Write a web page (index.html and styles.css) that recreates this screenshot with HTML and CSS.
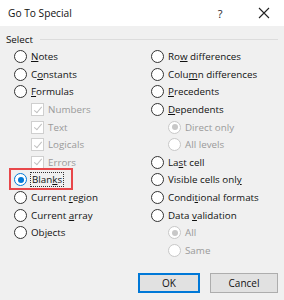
FILE: index.html
```html
<!DOCTYPE html>
<html lang="en">
<head>
    <meta charset="UTF-8">
    <title>Go To Special</title>
    <link rel="stylesheet" href="styles.css">
</head>
<body>
    <div class="dialog">
        <div class="titlebar">
            <span class="title">Go To Special</span>
            <span class="help">?</span>
            <span class="close">
                <svg width="12" height="12" viewBox="0 0 12 12"><path d="M1 1 L11 11 M11 1 L1 11" stroke="#222" stroke-width="1.1"/></svg>
            </span>
        </div>

        <div class="content">
            <div class="group-label"><span>Select</span><span class="line"></span></div>

            <div class="columns">
                <div class="col">
                    <div class="opt"><span class="radio"></span><span><u>N</u>otes</span></div>
                    <div class="opt"><span class="radio"></span><span>C<u>o</u>nstants</span></div>
                    <div class="opt"><span class="radio"></span><span><u>F</u>ormulas</span></div>
                    <div class="opt sub disabled"><span class="check"></span><span>Numbers</span></div>
                    <div class="opt sub disabled"><span class="check"></span><span>Text</span></div>
                    <div class="opt sub disabled"><span class="check"></span><span>Logicals</span></div>
                    <div class="opt sub disabled"><span class="check"></span><span>Errors</span></div>
                    <div class="opt highlight"><span class="radio on"></span><span class="focus">Blan<u>k</u>s</span></div>
                    <div class="opt"><span class="radio"></span><span>Current <u>r</u>egion</span></div>
                    <div class="opt"><span class="radio"></span><span>Current <u>a</u>rray</span></div>
                    <div class="opt"><span class="radio"></span><span>Ob<u>j</u>ects</span></div>
                </div>
                <div class="col">
                    <div class="opt"><span class="radio"></span><span>Ro<u>w</u> differences</span></div>
                    <div class="opt"><span class="radio"></span><span>Colu<u>m</u>n differences</span></div>
                    <div class="opt"><span class="radio"></span><span><u>P</u>recedents</span></div>
                    <div class="opt"><span class="radio"></span><span><u>D</u>ependents</span></div>
                    <div class="opt sub disabled"><span class="radio dim-on"></span><span>Direct only</span></div>
                    <div class="opt sub disabled"><span class="radio"></span><span>All levels</span></div>
                    <div class="opt"><span class="radio"></span><span>La<u>s</u>t cell</span></div>
                    <div class="opt"><span class="radio"></span><span>Visible cells onl<u>y</u></span></div>
                    <div class="opt"><span class="radio"></span><span>Condi<u>t</u>ional formats</span></div>
                    <div class="opt"><span class="radio"></span><span>Data <u>v</u>alidation</span></div>
                    <div class="opt sub disabled"><span class="radio dim-on"></span><span>All</span></div>
                    <div class="opt sub disabled"><span class="radio"></span><span>Same</span></div>
                </div>
            </div>

            <div class="buttons">
                <button class="btn default">OK</button>
                <button class="btn cancel">Cancel</button>
            </div>
        </div>
    </div>
</body>
</html>
```

FILE: styles.css
```css
body {
    margin: 0;
    font-family: 'Open Sans', 'Noto Sans', sans-serif;
    font-size: 9.8px;
    font-weight: 500;
    color: #111;
}

.dialog {
    width: 284px;
    height: 300px;
    background: #f0f0f0;
    overflow: hidden;
}

.titlebar {
    height: 26px;
    background: #fff;
    display: flex;
    align-items: center;
    padding-left: 8px;
}

.title {
    flex: 1;
    font-size: 10.2px;
    color: #111;
}

.help {
    width: 16px;
    text-align: center;
    margin-right: 30px;
    font-size: 11px;
    color: #222;
}

.close {
    width: 12px;
    height: 12px;
    margin-right: 14px;
    display: flex;
}

.content {
    padding: 4px 6px 0 6px;
}

.group-label {
    display: flex;
    align-items: center;
    height: 18px;
}

.group-label .line {
    flex: 1;
    height: 1px;
    background: #dcdcdc;
    margin-left: 7px;
}

.columns {
    display: grid;
    grid-template-columns: 137px 1fr;
    padding-left: 8px;
}

.opt {
    height: 17.6px;
    display: flex;
    align-items: center;
    white-space: nowrap;
    position: relative;
}

.opt u {
    text-decoration-thickness: 1px;
    text-underline-offset: 1px;
}

.opt.sub {
    padding-left: 17px;
}

.opt.disabled {
    color: #9a9a9a;
}

.radio {
    width: 11px;
    height: 11px;
    border: 1px solid #333;
    border-radius: 50%;
    background: #fff;
    margin-right: 4px;
    flex-shrink: 0;
    position: relative;
}

.disabled .radio {
    border-color: #c8c8c8;
}

.radio.on {
    border-color: #0078d7;
}

.radio.on::after,
.radio.dim-on::after {
    content: "";
    position: absolute;
    left: 2.5px;
    top: 2.5px;
    width: 6px;
    height: 6px;
    border-radius: 50%;
    background: #0078d7;
}

.radio.dim-on::after {
    background: #c8c8c8;
}

.check {
    width: 11px;
    height: 11px;
    border: 1px solid #cfcfcf;
    background: #fff;
    margin-right: 4px;
    position: relative;
}

.check::after {
    content: "";
    position: absolute;
    left: 3.5px;
    top: 0.5px;
    width: 3px;
    height: 7px;
    border: solid #c0c0c0;
    border-width: 0 1px 1px 0;
    transform: rotate(40deg);
}

.highlight::before {
    content: "";
    position: absolute;
    left: -5px;
    top: -3px;
    width: 60px;
    height: 18px;
    border: 2px solid #e8474a;
}

.focus {
    outline: 1px dotted #333;
    outline-offset: 0;
    padding: 0 1px;
    line-height: 13px;
}

.buttons {
    display: flex;
    justify-content: flex-end;
    gap: 10px;
    margin-top: 14px;
}

.btn {
    font-family: inherit;
    font-size: 10px;
    font-weight: 500;
    height: 20px;
    padding: 0;
    background: #e1e1e1;
    border: 1px solid #adadad;
    color: #111;
}

.btn.default {
    width: 62px;
    border: 2px solid #0078d7;
}

.btn.cancel {
    width: 68px;
}
```
